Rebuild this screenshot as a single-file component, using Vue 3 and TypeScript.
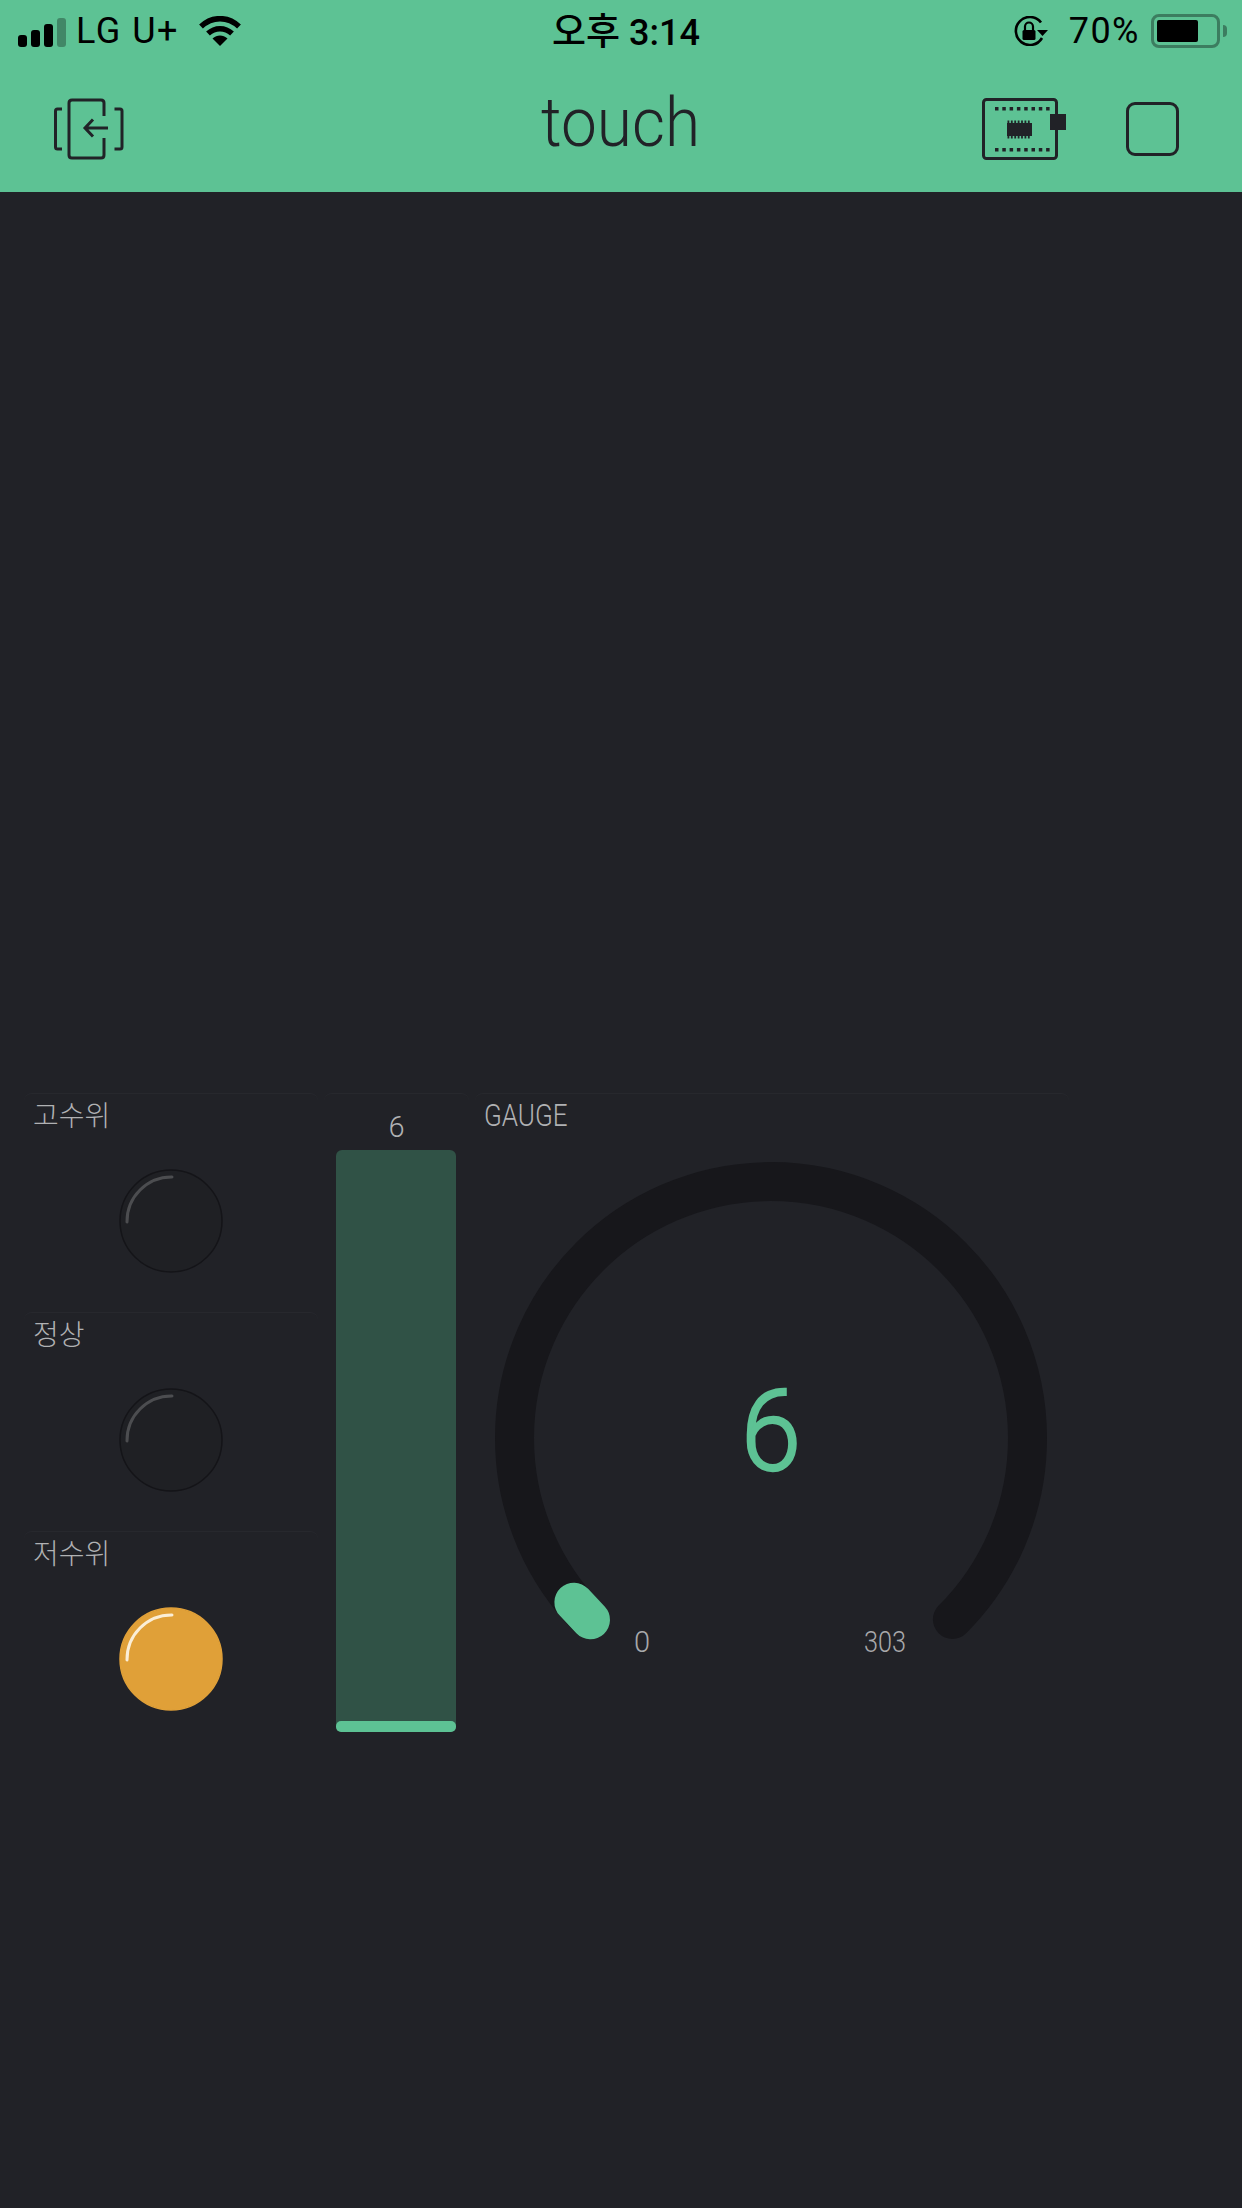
<script setup lang="ts">
const leds = [
  { label: '고수위', on: false },
  { label: '정상', on: false },
  { label: '저수위', on: true },
];
const bars = [
  { x: 18, y: 32, h: 12 },
  { x: 31, y: 27, h: 17 },
  { x: 44, y: 21, h: 23 },
];
const pinXs = [0, 1, 2, 3, 4, 5, 6, 7].map((i) => 13 + i * 7.3);
const legXs = [0, 1, 2, 3, 4, 5, 6].map((i) => 25.5 + i * 3.4);
</script>

<template>
  <div class="screen">
    <header class="topbar">
      <div class="status">
        <div class="status-left">
          <svg class="signal" width="66" height="48" viewBox="0 0 66 48">
            <rect v-for="b in bars" :key="b.x" :x="b.x" :y="b.y - 4" width="9" :height="b.h" rx="3" fill="#000" />
            <rect x="57" y="11" width="9" height="29" rx="3" fill="#000" opacity="0.3" />
          </svg>
          <span class="carrier">LG U+</span>
          <svg class="wifi" width="42" height="30" viewBox="0 0 42 30">
            <path d="M2 10.5C13 0 29 0 40 10.5" fill="none" stroke="#000" stroke-width="5.5" />
            <path d="M9 17.5C16 11 26 11 33 17.5" fill="none" stroke="#000" stroke-width="5.5" />
            <path d="M21 30L13.5 22.5C18 18.5 24 18.5 28.5 22.5Z" fill="#000" />
          </svg>
        </div>
        <div class="clock"><span class="clock-ko">오후</span> 3:14</div>
        <div class="status-right">
          <svg width="36" height="30" viewBox="0 0 36 30">
            <path d="M29 22A14 14 0 1 1 28 6.5" fill="none" stroke="#000" stroke-width="2.6" />
            <path d="M24 14H35L29.500 20Z" fill="#000" />
            <rect x="9.500" y="14" width="13" height="10" rx="1.500" fill="#000" />
            <path d="M12 14V10.500a4 4 0 0 1 8 0V14" fill="none" stroke="#000" stroke-width="2.2" />
          </svg>
          <span class="percent">70%</span>
          <div class="battery">
            <div class="battery-level"></div>
          </div>
          <div class="battery-tip"></div>
        </div>
      </div>
      <div class="navbar">
        <svg class="nav-left" width="72" height="62" viewBox="0 0 72 62" fill="none" stroke="#212227" stroke-width="3">
          <path d="M10 11H5.500Q3.500 11 3.500 13V49Q3.500 51 5.500 51H10" />
          <path d="M62.500 11H68Q70 11 70 13V49Q70 51 68 51H62.500" />
          <path d="M52 18V5Q52 2 49 2H20Q17 2 17 5V57Q17 60 20 60H49Q52 60 52 57V40" />
          <path d="M56 30H33M41 21.500L33 30L41 38.500" />
        </svg>
        <h1 class="title">touch</h1>
        <div class="nav-right">
          <svg width="84" height="62" viewBox="0 0 84 62">
            <rect x="1.500" y="1.500" width="73" height="59" rx="3" fill="none" stroke="#212227" stroke-width="3" />
            <rect v-for="x in pinXs" :key="'t' + x" :x="x" y="9" width="3.500" height="3.500" fill="#212227" />
            <rect v-for="x in pinXs" :key="'b' + x" :x="x" y="50" width="3.500" height="3.500" fill="#212227" />
            <rect x="25" y="25" width="25" height="13" fill="#212227" />
            <rect v-for="x in legXs" :key="'lt' + x" :x="x" y="22.500" width="1.800" height="3" fill="#212227" />
            <rect v-for="x in legXs" :key="'lb' + x" :x="x" y="37.500" width="1.800" height="3" fill="#212227" />
            <rect x="68" y="16" width="16" height="16" fill="#212227" />
          </svg>
          <div class="stop"></div>
        </div>
      </div>
    </header>

    <main class="widgets">
      <section class="led-col">
        <div v-for="led in leds" :key="led.label" class="card led-card">
          <div class="label">{{ led.label }}</div>
          <svg class="led" width="104" height="104" viewBox="0 0 104 104">
            <circle cx="52" cy="52" r="51" :fill="led.on ? '#e0a038' : '#1f2024'" :stroke="led.on ? '#e0a038' : '#141418'" stroke-width="1.500" />
            <path
              d="M8 53A44.500 44.500 0 0 1 53 8"
              fill="none"
              stroke-width="3"
              stroke-linecap="round"
              :stroke="led.on ? '#fbeed6' : '#4c4d50'"
            />
          </svg>
        </div>
      </section>

      <section class="card bar-card">
        <div class="bar-value">6</div>
        <div class="bar-track">
          <div class="bar-fill"></div>
        </div>
      </section>

      <section class="card gauge-card">
        <div class="label gauge-label">GAUGE</div>
        <svg class="gauge" width="594" height="591" viewBox="0 0 594 591">
          <path
            d="M114.600 466.400A256.500 256.500 0 1 1 477.400 466.400"
            fill="none"
            stroke="#17171b"
            stroke-width="39"
            stroke-linecap="round"
          />
          <path
            d="M115.500 466.800L98.900 449.200"
            fill="none"
            stroke="#5dc294"
            stroke-width="39"
            stroke-linecap="round"
          />
          <text class="gauge-value" x="296" y="317" text-anchor="middle" textLength="60" lengthAdjust="spacingAndGlyphs">6</text>
          <text class="gauge-end" x="167" y="499" text-anchor="middle">0</text>
          <text class="gauge-end" x="410" y="499" text-anchor="middle" textLength="42" lengthAdjust="spacingAndGlyphs">303</text>
        </svg>
      </section>
    </main>
  </div>
</template>

<style>
html,
body {
  margin: 0;
  background: #212227;
}
</style>

<style scoped>
.screen {
  width: 1242px;
  height: 2208px;
  overflow: hidden;
  background: #212227;
  font-family: Roboto, "Noto Sans CJK KR", sans-serif;
}

.topbar {
  height: 192px;
  background: #5dc294;
}

.status {
  height: 62px;
  display: grid;
  grid-template-columns: 1fr auto 1fr;
  align-items: center;
  color: #000;
  font-size: 36px;
}

.status-left {
  display: flex;
  align-items: center;
}

.signal {
  flex: none;
}

.carrier {
  margin-left: 10px;
  letter-spacing: 1.5px;
}

.wifi {
  margin-left: 20px;
}

.clock {
  margin-bottom: 4px;
  padding-left: 10px;
  font-weight: 500;
  font-size: 36px;
  white-space: nowrap;
}

.clock-ko {
  font-size: 37px;
}

.status-right {
  display: flex;
  align-items: center;
  justify-content: flex-end;
  padding-right: 15px;
}

.percent {
  margin-left: 20px;
  margin-right: 11px;
  letter-spacing: 1.5px;
}

.battery {
  box-sizing: border-box;
  width: 69px;
  height: 34px;
  padding: 3px;
  border: 3px solid #3c7d60;
  border-radius: 8px;
}

.battery-level {
  width: 41px;
  height: 22px;
  background: #000;
  border-radius: 2px;
}

.battery-tip {
  width: 4px;
  height: 12px;
  margin-left: 3px;
  background: #3c7d60;
  border-radius: 0 4px 4px 0;
}

.navbar {
  height: 130px;
  display: grid;
  grid-template-columns: 1fr auto 1fr;
  align-items: center;
}

.nav-left {
  margin: 4px 0 0 52px;
}

.title {
  margin: -8px 0 0;
  font-size: 68px;
  font-weight: 300;
  color: #212227;
  transform: scaleX(0.94);
}

.nav-right {
  display: flex;
  align-items: center;
  justify-content: flex-end;
  gap: 60px;
  padding: 4px 63px 0 0;
}

.stop {
  box-sizing: border-box;
  width: 53px;
  height: 54px;
  border: 3px solid #212227;
  border-radius: 9px;
}

.widgets {
  display: flex;
  gap: 6px;
  padding: 901px 0 0 24px;
}

.card {
  box-sizing: border-box;
  border-top: 1px solid #27282d;
  border-radius: 8px;
}

.led-col {
  width: 294px;
  display: flex;
  flex-direction: column;
  gap: 6px;
}

.led-card {
  height: 213px;
  display: flex;
  flex-direction: column;
  align-items: center;
}

.label {
  align-self: stretch;
  height: 75px;
  padding: 0 0 0 9px;
  box-sizing: border-box;
  font-size: 28px;
  font-weight: 300;
  color: #b0b1b3;
}

.bar-card {
  width: 145px;
  height: 651px;
  padding: 0 12px;
}

.bar-value {
  height: 56px;
  padding-top: 16px;
  box-sizing: border-box;
  text-align: center;
  font-size: 29px;
  font-weight: 300;
  line-height: 34px;
  color: #b0b1b3;
}

.bar-track {
  width: 120px;
  height: 582px;
  display: flex;
  flex-direction: column;
  justify-content: flex-end;
  background: #305246;
  border-radius: 6px;
}

.bar-fill {
  height: 11px;
  background: #5dc294;
  border-radius: 5px;
}

.gauge-card {
  width: 594px;
  height: 651px;
}

.gauge-label {
  height: 59px;
  font-size: 31px;
  padding-top: 3px;
  transform: scaleX(0.84);
  transform-origin: 9px 0;
}

.gauge {
  display: block;
}

.gauge-value {
  font-size: 113px;
  font-weight: 300;
  fill: #5dc294;
  stroke: #5dc294;
  stroke-width: 2.5px;
}

.gauge-end {
  font-size: 29px;
  font-weight: 300;
  fill: #a8a9ab;
}
</style>
